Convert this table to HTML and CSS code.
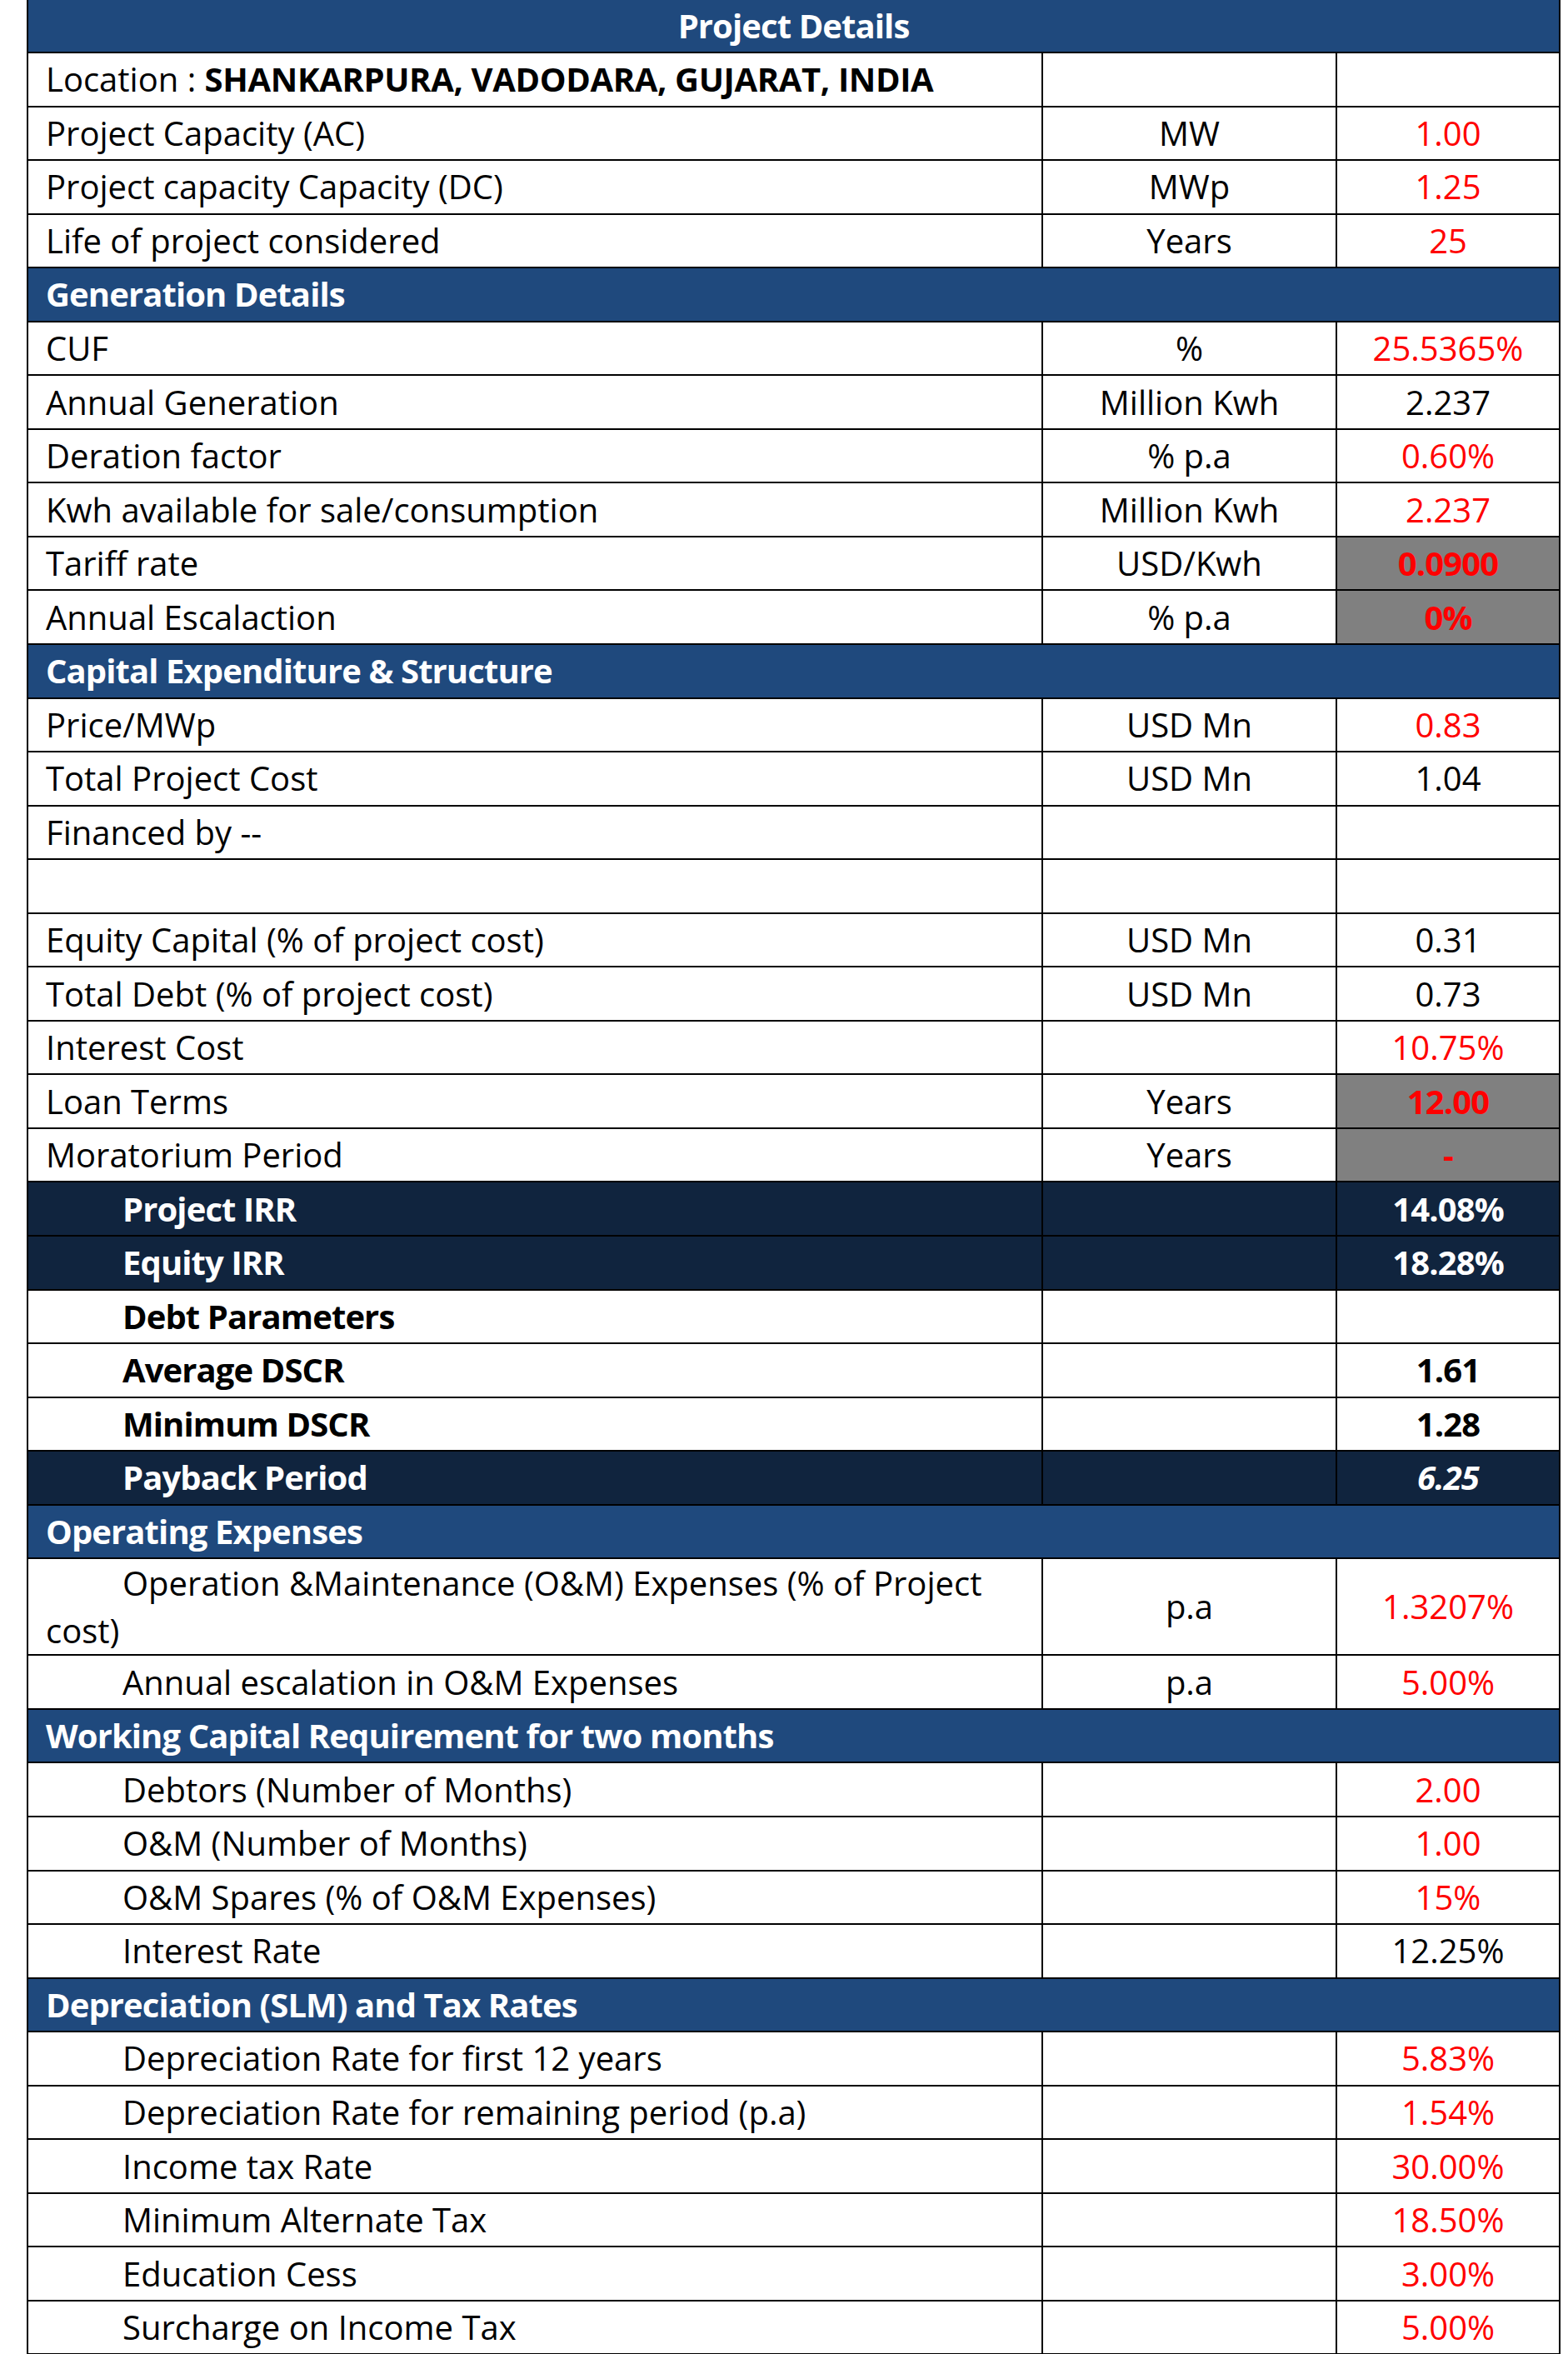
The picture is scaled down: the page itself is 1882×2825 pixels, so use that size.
FILE: index.html
```html
<!DOCTYPE html>
<html lang="en">
<head>
<meta charset="utf-8">
<title>Project Details</title>
<link rel="stylesheet" href="styles.css">
</head>
<body>
<table class="sheet">
  <colgroup>
    <col class="c-label">
    <col class="c-unit">
    <col class="c-val">
  </colgroup>
  <tbody>
    <tr class="title"><td colspan="3">Project Details</td></tr>
    <tr><td class="label">Location : <b class="loc">SHANKARPURA, VADODARA, GUJARAT, INDIA</b></td><td class="unit"></td><td class="val"></td></tr>
    <tr><td class="label">Project Capacity (AC)</td><td class="unit">MW</td><td class="val red">1.00</td></tr>
    <tr><td class="label">Project capacity Capacity (DC)</td><td class="unit">MWp</td><td class="val red">1.25</td></tr>
    <tr><td class="label">Life of project considered</td><td class="unit">Years</td><td class="val red">25</td></tr>
    <tr class="section"><td colspan="3">Generation Details</td></tr>
    <tr><td class="label">CUF</td><td class="unit">%</td><td class="val red">25.5365%</td></tr>
    <tr><td class="label">Annual Generation</td><td class="unit">Million Kwh</td><td class="val">2.237</td></tr>
    <tr><td class="label">Deration factor</td><td class="unit">% p.a</td><td class="val red">0.60%</td></tr>
    <tr><td class="label">Kwh available for sale/consumption</td><td class="unit">Million Kwh</td><td class="val red">2.237</td></tr>
    <tr><td class="label">Tariff rate</td><td class="unit">USD/Kwh</td><td class="val red gray">0.0900</td></tr>
    <tr><td class="label">Annual Escalaction</td><td class="unit">% p.a</td><td class="val red gray">0%</td></tr>
    <tr class="section"><td colspan="3">Capital Expenditure &amp; Structure</td></tr>
    <tr><td class="label">Price/MWp</td><td class="unit">USD Mn</td><td class="val red">0.83</td></tr>
    <tr><td class="label">Total Project Cost</td><td class="unit">USD Mn</td><td class="val">1.04</td></tr>
    <tr><td class="label">Financed by --</td><td class="unit"></td><td class="val"></td></tr>
    <tr><td class="label"></td><td class="unit"></td><td class="val"></td></tr>
    <tr><td class="label">Equity Capital (% of project cost)</td><td class="unit">USD Mn</td><td class="val">0.31</td></tr>
    <tr><td class="label">Total Debt (% of project cost)</td><td class="unit">USD Mn</td><td class="val">0.73</td></tr>
    <tr><td class="label">Interest Cost</td><td class="unit"></td><td class="val red">10.75%</td></tr>
    <tr><td class="label">Loan Terms</td><td class="unit">Years</td><td class="val red gray">12.00</td></tr>
    <tr><td class="label">Moratorium Period</td><td class="unit">Years</td><td class="val red gray">-</td></tr>
    <tr class="navy"><td class="label ind">Project IRR</td><td class="unit"></td><td class="val">14.08%</td></tr>
    <tr class="navy"><td class="label ind">Equity IRR</td><td class="unit"></td><td class="val">18.28%</td></tr>
    <tr class="strong"><td class="label ind">Debt Parameters</td><td class="unit"></td><td class="val"></td></tr>
    <tr class="strong"><td class="label ind">Average DSCR</td><td class="unit"></td><td class="val">1.61</td></tr>
    <tr class="strong"><td class="label ind">Minimum DSCR</td><td class="unit"></td><td class="val">1.28</td></tr>
    <tr class="navy"><td class="label ind">Payback Period</td><td class="unit"></td><td class="val italic">6.25</td></tr>
    <tr class="section"><td colspan="3">Operating Expenses</td></tr>
    <tr class="tall"><td class="label wrap">Operation &amp;Maintenance (O&amp;M) Expenses (% of Project cost)</td><td class="unit">p.a</td><td class="val red">1.3207%</td></tr>
    <tr><td class="label ind">Annual escalation in O&amp;M Expenses</td><td class="unit">p.a</td><td class="val red">5.00%</td></tr>
    <tr class="section"><td colspan="3">Working Capital Requirement for two months</td></tr>
    <tr><td class="label ind">Debtors (Number of Months)</td><td class="unit"></td><td class="val red">2.00</td></tr>
    <tr><td class="label ind">O&amp;M (Number of Months)</td><td class="unit"></td><td class="val red">1.00</td></tr>
    <tr><td class="label ind">O&amp;M Spares (% of O&amp;M Expenses)</td><td class="unit"></td><td class="val red">15%</td></tr>
    <tr><td class="label ind">Interest Rate</td><td class="unit"></td><td class="val">12.25%</td></tr>
    <tr class="section"><td colspan="3">Depreciation (SLM) and Tax Rates</td></tr>
    <tr><td class="label ind">Depreciation Rate for first 12 years</td><td class="unit"></td><td class="val red">5.83%</td></tr>
    <tr><td class="label ind">Depreciation Rate for remaining period (p.a)</td><td class="unit"></td><td class="val red">1.54%</td></tr>
    <tr><td class="label ind">Income tax Rate</td><td class="unit"></td><td class="val red">30.00%</td></tr>
    <tr><td class="label ind">Minimum Alternate Tax</td><td class="unit"></td><td class="val red">18.50%</td></tr>
    <tr><td class="label ind">Education Cess</td><td class="unit"></td><td class="val red">3.00%</td></tr>
    <tr><td class="label ind">Surcharge on Income Tax</td><td class="unit"></td><td class="val red">5.00%</td></tr>
  </tbody>
</table>
</body>
</html>
```

FILE: styles.css
```css
html, body {
  margin: 0;
  padding: 0;
  background: #ffffff;
}

body {
  font-family: "Open Sans", "Noto Sans", sans-serif;
  color: #000000;
}

.sheet {
  margin-left: 32px;
  width: 1839px;
  border-collapse: collapse;
  table-layout: fixed;
  font-size: 40px;
}

.c-label { width: 1218px; }
.c-unit  { width: 353px; }
.c-val   { width: 268px; }

.sheet tr { height: 64.55px; }

.sheet td {
  border: 2px solid #000000;
  padding: 0 0 0 21px;
  vertical-align: middle;
  white-space: nowrap;
  line-height: 1.2;
  overflow: hidden;
}

.sheet td.unit,
.sheet td.val {
  text-align: center;
  padding: 0;
}

.sheet td.ind { padding-left: 113px; }

.title td,
.section td,
.navy td,
.strong td,
.sheet td.gray {
  font-weight: bold;
  letter-spacing: -0.9px;
}

.sheet b.loc {
  font-weight: bold;
  letter-spacing: -0.35px;
}

.title td {
  background: #1f497d;
  color: #ffffff;
  text-align: center;
  border-top: 0;
  padding: 0;
}

.sheet tr.title { height: 63px; }

.section td {
  background: #1f497d;
  color: #ffffff;
}

.navy td {
  background: #10243e;
  color: #ffffff;
}

.red { color: #ff0000; }

.sheet td.gray { background: #808080; }

.italic { font-style: italic; }

.sheet tr.tall { height: 113.5px; }

.sheet td.wrap {
  white-space: normal;
  text-indent: 92px;
  line-height: 57px;
  padding-right: 20px;
}
```
